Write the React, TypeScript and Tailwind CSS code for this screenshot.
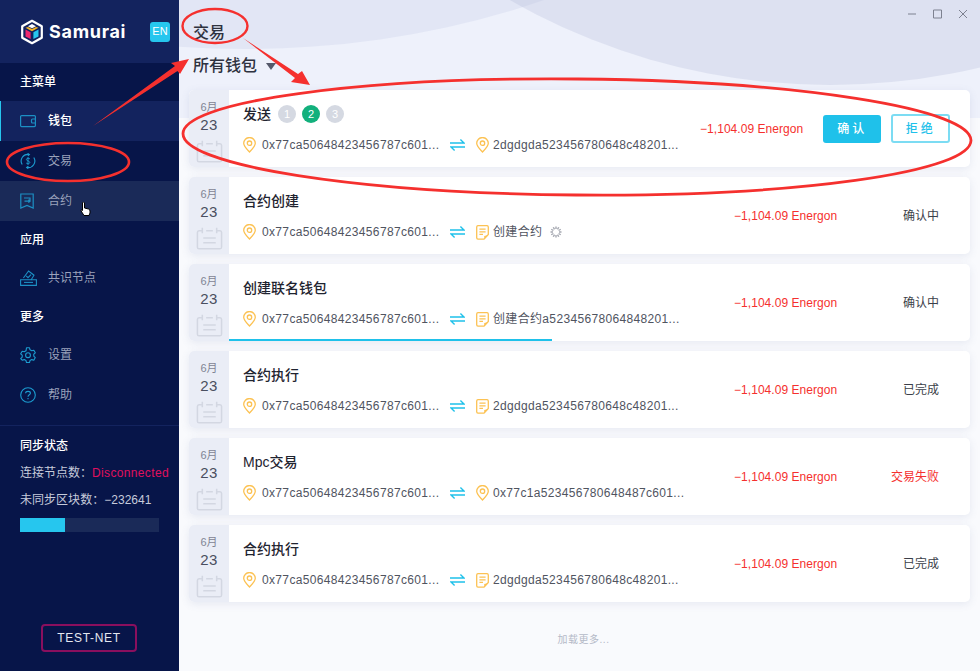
import React from 'react';

type Row = {
  title: string;
  steps?: boolean;
  to: string;
  toIcon: 'pin' | 'doc';
  spinner?: boolean;
  status?: string;
  statusRed?: boolean;
  actions?: boolean;
  progress?: boolean;
};

const rows: Row[] = [
  { title: '发送', steps: true, to: '2dgdgda523456780648c48201...', toIcon: 'pin', actions: true },
  { title: '合约创建', to: '创建合约', toIcon: 'doc', spinner: true, status: '确认中' },
  { title: '创建联名钱包', to: '创建合约a52345678064848201...', toIcon: 'doc', status: '确认中', progress: true },
  { title: '合约执行', to: '2dgdgda523456780648c48201...', toIcon: 'doc', status: '已完成' },
  { title: 'Mpc交易', to: '0x77c1a523456780648487c601...', toIcon: 'pin', status: '交易失败', statusRed: true },
  { title: '合约执行', to: '2dgdgda523456780648c48201...', toIcon: 'doc', status: '已完成' },
];

const Logo = () => (
  <svg width="24" height="26" viewBox="0 0 24 26" fill="none">
    <path d="M12 1.800 21.800 7.200V18.800L12 24.200 2.200 18.800V7.200Z" stroke="#fff" strokeWidth="2.200" strokeLinejoin="round" />
    <path d="M8 7.200 12 5 16 7.200 12 9.200Z" fill="#fff" />
    <path d="M5.500 8.800 8 8 12 10 16 8 18.500 8.800 12 12.200Z" fill="#f5b323" />
    <path d="M5.500 10.500 10.600 13.200V20L5.500 17.400Z" fill="#f0286e" />
    <path d="M18.500 10.500 13.400 13.200V20L18.500 17.400Z" fill="#26c6ee" />
  </svg>
);

const WalletIcon = () => (
  <svg width="16" height="14" viewBox="0 0 16 14" fill="none" stroke="#1c8fc4" strokeWidth="1.2">
    <rect x="0.6" y="1.6" width="14.8" height="11" rx="1" />
    <path d="M15.4 5H12.5a1 1 0 0 0-1 1v2a1 1 0 0 0 1 1h2.9" />
  </svg>
);

const TradeIcon = () => (
  <svg width="16" height="16" viewBox="0 0 16 16" fill="none" stroke="#1c9cd0" strokeWidth="1.1">
    <path d="M2.2 11.5A6.6 6.6 0 0 1 9 1.500" />
    <path d="M13.8 4.500A6.6 6.6 0 0 1 7 14.500" />
    <path d="M7.600 0.400 9.400 1.500 7.800 2.900M8.400 13.100 6.600 14.500 8.200 15.600" />
    <path d="M10 6C9.400 5 6.400 4.900 6.400 6.500 6.400 8.200 9.800 7.700 9.800 9.500 9.800 11 6.800 11 6.200 10M8 4V12" strokeWidth="0.9" />
  </svg>
);

const ContractIcon = () => (
  <svg width="14" height="16" viewBox="0 0 14 16" fill="none" stroke="#1c8fc4" strokeWidth="1.2">
    <path d="M0.8 1H13.2V15L7 12.4 0.8 15Z" />
    <path d="M4 5H10V8.2H4.5M8.4 6.8 10 8.2 8.4 9.6" />
  </svg>
);

const NodeIcon = () => (
  <svg width="17" height="16" viewBox="0 0 17 16" fill="none" stroke="#1c8fc4" strokeWidth="1.1">
    <path d="M3.400 8 8.600 1 14 5.200 11 10" />
    <path d="M6.200 5.800 8 7.600 11 4.600" />
    <path d="M0.600 9.800H16.400V15.400H0.600Z" />
    <path d="M4 12.400H13" />
  </svg>
);

const GearIcon = () => (
  <svg width="16" height="16" viewBox="0 0 16 16" fill="none" stroke="#1c9cd0" strokeWidth="1.1" strokeLinejoin="round">
    <path d="M6.5.8h3l.5 2 1.800 1 2-.6 1.500 2.600-1.500 1.400v2l1.500 1.400-1.500 2.600-2-.6-1.800 1-.5 2h-3l-.5-2-1.800-1-2 .6L.7 11.600l1.500-1.400v-2L.7 6.800l1.500-2.600 2 .6 1.800-1z" />
    <circle cx="8" cy="8.200" r="2.400" />
  </svg>
);

const HelpIcon = () => (
  <svg width="16" height="16" viewBox="0 0 16 16" fill="none" stroke="#1c9cd0" strokeWidth="1.1">
    <circle cx="8" cy="8" r="7.300" />
    <path d="M5.600 6.200C5.800 3.800 10.400 3.800 10.400 6.200 10.400 7.800 8 7.800 8 9.800" />
    <path d="M8 11v1.200" />
  </svg>
);

const Pin = () => (
  <svg width="13" height="16" viewBox="0 0 13 16" fill="none" stroke="#fcc253" strokeWidth="1.3" className="shrink-0">
    <path d="M6.500 15C3.500 11.800 0.700 9.200 0.700 6.300A5.800 5.800 0 0 1 12.300 6.300C12.300 9.200 9.500 11.800 6.500 15Z" />
    <circle cx="6.500" cy="6.200" r="2.200" />
  </svg>
);

const Doc = () => (
  <svg width="13" height="15" viewBox="0 0 13 15" fill="none" stroke="#fcc253" strokeWidth="1.3" className="shrink-0">
    <path d="M8 14.200H2A1.400 1.400 0 0 1 .7 12.800V2A1.400 1.400 0 0 1 2 .7h9A1.400 1.400 0 0 1 12.300 2v7.500Z" />
    <path d="M3.400 4.200H9.600M3.400 6.800H9.600M3.400 9.400H7" />
    <path d="M12.300 10 8.400 14.200 8.200 11 Z" fill="#fcc253" stroke="none" />
  </svg>
);

const Swap = () => (
  <svg width="15" height="12" viewBox="0 0 15 12" fill="none" stroke="#1fc1ea" strokeWidth="1.400" className="shrink-0">
    <path d="M0 4H14L10.400 .6" />
    <path d="M15 8H1L4.600 11.400" />
  </svg>
);

const Calendar = () => (
  <svg width="27" height="23" viewBox="0 0 27 24" fill="none" stroke="#d3d7e2" strokeWidth="1.600">
    <path d="M6 4H2.600A1.800 1.800 0 0 0 .9 5.800V21a1.800 1.800 0 0 0 1.700 1.800H24.400A1.800 1.800 0 0 0 26.100 21V5.800A1.800 1.800 0 0 0 24.400 4H21" />
    <path d="M6 .8V6.500M21 .8V6.500M10 4H17M7 11.500H20M7 16.500H20" />
  </svg>
);

const Spinner = () => (
  <svg width="12" height="12" viewBox="0 0 12 12" stroke="#a4a7b0" strokeWidth="1.400" className="ml-2">
    {[0, 30, 60, 90, 120, 150, 180, 210, 240, 270, 300, 330].map((a) => (
      <line key={a} x1="6" y1="0.5" x2="6" y2="3" transform={`rotate(${a} 6 6)`} />
    ))}
  </svg>
);

const Steps = () => (
  <div className="ml-[7px] flex gap-[6px]">
    <span className="flex h-[18px] w-[18px] items-center justify-center rounded-full bg-[#d5d9e2] text-[11px] font-normal text-white">1</span>
    <span className="flex h-[18px] w-[18px] items-center justify-center rounded-full bg-[#12b07c] text-[11px] font-normal text-white">2</span>
    <span className="flex h-[18px] w-[18px] items-center justify-center rounded-full bg-[#d5d9e2] text-[11px] font-normal text-white">3</span>
  </div>
);

const Card = ({ row }: { row: Row }) => (
  <div className="relative flex h-[77px] shrink-0 overflow-hidden rounded-[5px] bg-white shadow-[0_2px_8px_rgba(90,105,160,0.12)]">
    <div className="flex w-[40px] shrink-0 flex-col items-center bg-[#eaedf6] pt-[9px]">
      <div className="text-[11px] leading-[16px] text-[#7f8494]">6月</div>
      <div className="text-[15px] leading-[20px] tracking-[0.3px] text-[#4a4f60]">23</div>
      <div className="mt-[5px] flex"><Calendar /></div>
    </div>
    <div className="flex w-[470px] shrink-0 flex-col pl-[14px] pt-[14px]">
      <div className="flex h-[20px] items-center text-[14px] font-medium text-[#1f2430]">
        {row.title}
        {row.steps && <Steps />}
      </div>
      <div className="mt-[11px] flex h-[20px] items-center text-[12px] text-[#50545f]">
        <Pin />
        <span className="ml-[6px] w-[178px] shrink-0 whitespace-nowrap tracking-[0.34px]">0x77ca50648423456787c601...</span>
        <span className="ml-[10px] mr-[11px]"><Swap /></span>
        {row.toIcon === 'pin' ? <Pin /> : <Doc />}
        <span className="ml-[4px] whitespace-nowrap tracking-[0.34px]">{row.to}</span>
        {row.spinner && <Spinner />}
      </div>
    </div>
    <div className="flex flex-1 items-center">
      {row.actions ? (
        <>
          <div className="ml-[1px] whitespace-nowrap text-[12px] tracking-[0.05px] text-[#f5302e]">−1,104.09 Energon</div>
          <button className="ml-[20px] h-[28px] w-[58px] rounded-[3px] bg-[#1fc1ea] text-[12px] font-medium tracking-[3px] text-white">确认</button>
          <button className="ml-[10px] h-[29px] w-[59px] rounded-[3px] border-2 border-[#7cdcf3] text-[12px] font-medium tracking-[3px] text-[#1fc1ea]">拒绝</button>
        </>
      ) : (
        <>
          <div className="ml-[35px] whitespace-nowrap text-[12px] tracking-[0.05px] text-[#f5302e]">−1,104.09 Energon</div>
          <div className={`flex-1 pr-[31px] text-right text-[12px] ${row.statusRed ? 'text-[#f5302e]' : 'text-[#3b3f4a]'}`}>{row.status}</div>
        </>
      )}
    </div>
    {row.progress && <div className="absolute bottom-0 left-[40px] h-[2px] w-[323px] bg-[#1fc1ea]" />}
  </div>
);

const NavItem = ({ icon, label, active, hover }: { icon: React.ReactNode; label: string; active?: boolean; hover?: boolean }) => (
  <div className={`flex h-[40px] shrink-0 items-center ${active ? 'border-l border-[#26c6ee] bg-[#13235e] pl-[19px] font-medium text-white' : 'pl-[20px] text-[#9aa2bb]'} ${hover ? 'bg-[#1a2a58]' : ''}`}>
    <span className="flex w-[28px] shrink-0 items-center">{icon}</span>
    <span className="text-[12px]">{label}</span>
  </div>
);

const Annotations = () => (
  <svg className="pointer-events-none absolute inset-0" width="980" height="671" viewBox="0 0 980 671" fill="none">
    <ellipse cx="215" cy="26" rx="32.500" ry="17" stroke="#f5302e" strokeWidth="2.400" />
    <ellipse cx="68" cy="162" rx="61" ry="19" stroke="#f5302e" strokeWidth="2.600" />
    <ellipse cx="577" cy="137" rx="394" ry="58" stroke="#f5302e" strokeWidth="2.800" transform="rotate(0.5 577 137)" />
    <path d="M93 126 175 66 171 63 189 59 180 74 177.500 71Z" fill="#f5302e" />
    <path d="M243 38 298 74 302 71 310 85 291 82 295 78Z" fill="#f5302e" />
  </svg>
);

export default function App() {
  return (
    <div className="relative flex h-[671px] w-[980px] overflow-hidden bg-[#f9fafd] font-['Liberation_Sans','Noto_Sans_CJK_SC',sans-serif]">
      <aside className="flex w-[179px] shrink-0 flex-col bg-[#071549] text-white">
        <div className="flex h-[63px] shrink-0 items-center bg-[#13235e] pl-[20px]">
          <Logo />
          <span className="ml-[5px] w-[77px] shrink-0 whitespace-nowrap font-['Inter',sans-serif] text-[18px] font-bold tracking-[0.7px]">Samurai</span>
          <span className="ml-[24px] flex h-[20px] w-[20px] items-center justify-center rounded-[3px] bg-[#26c6ee] text-[11px]">EN</span>
        </div>
        <div className="flex h-[38px] shrink-0 items-center pl-[20px] text-[12px] font-medium">主菜单</div>
        <NavItem active icon={<WalletIcon />} label="钱包" />
        <NavItem icon={<TradeIcon />} label="交易" />
        <NavItem hover icon={<ContractIcon />} label="合约" />
        <div className="flex h-[37px] shrink-0 items-center pl-[20px] text-[12px] font-medium">应用</div>
        <NavItem icon={<NodeIcon />} label="共识节点" />
        <div className="flex h-[37px] shrink-0 items-center pl-[20px] text-[12px] font-medium">更多</div>
        <NavItem icon={<GearIcon />} label="设置" />
        <NavItem icon={<HelpIcon />} label="帮助" />
        <div className="mt-[10px] border-t border-[#13235e] px-[20px] pt-[11px]">
          <div className="text-[12px] font-medium leading-[18px]">同步状态</div>
          <div className="mt-[9px] whitespace-nowrap text-[12px] leading-[18px] text-[#c6cbdb]">连接节点数：<span className="tracking-[0.35px] text-[#e0105e]">Disconnected</span></div>
          <div className="mt-[9px] whitespace-nowrap text-[12px] leading-[18px] tracking-[0.03px] text-[#c6cbdb]">未同步区块数：−232641</div>
          <div className="mt-[9px] h-[14px] w-[139px] bg-[#1a2a58]">
            <div className="h-full w-[45px] bg-[#26c6ee]" />
          </div>
        </div>
        <div className="mt-auto mb-[19px] ml-[41px]">
          <div className="flex h-[28px] w-[96px] items-center justify-center rounded-[4px] border-2 border-[#8a0f5e] text-[12px] tracking-[0.7px] text-[#e4e7f0]">TEST-NET</div>
        </div>
      </aside>

      <main className="relative min-w-0 flex-1 overflow-hidden">
        <div className="absolute inset-x-0 top-0 h-[118px] bg-[#eef1fb]" />
        <div className="absolute left-[-627px] top-[-951px] h-[1000px] w-[1386px] rounded-[50%] bg-[#b4bee0]/20" />
        <div className="absolute left-[27px] top-[-1115px] h-[1200px] w-[1248px] rounded-[50%] bg-[#aab2d4]/25" />
        <div className="relative flex h-full flex-col px-[10px]">
          <div className="flex h-[25px] shrink-0 items-start justify-end pr-[2px] pt-[9px]">
            <svg width="60" height="10" viewBox="0 0 60 10" fill="none" stroke="#7d8190" strokeWidth="1">
              <path d="M0 5H8M25.500 1H33.500V9H25.500ZM51 1 59 9M59 1 51 9" />
            </svg>
          </div>
          <div className="ml-[4px] h-[20px] shrink-0 text-[16px] font-medium leading-[16px] text-[#2e3240]">交易</div>
          <div className="ml-[4px] mt-[11px] flex h-[20px] shrink-0 items-center text-[16px] font-medium text-[#2e3240]">
            所有钱包
            <span className="ml-[9px] h-0 w-0 border-x-[5px] border-t-[7px] border-x-transparent border-t-[#55596a]" />
          </div>
          <div className="mt-[14px] flex flex-col gap-[10px]">
            {rows.map((row, i) => <Card key={i} row={row} />)}
          </div>
          <div className="mt-[30px] pl-[8px] text-center text-[10px] tracking-[0.5px] text-[#b4b9c7]">加载更多...</div>
        </div>
      </main>

      <Annotations />
      {/* cursor */}
      <svg className="pointer-events-none absolute left-[80px] top-[202px]" width="11" height="14" viewBox="0 0 11 14">
        <path d="M2.500 1a1 1 0 0 1 2 0V6l4 1a2 2 0 0 1 1.500 2v2l-1 2.500H4L.8 8.500l1.200-.7 .5.700Z" fill="#fff" stroke="#000" strokeWidth="1" />
      </svg>
    </div>
  );
}
